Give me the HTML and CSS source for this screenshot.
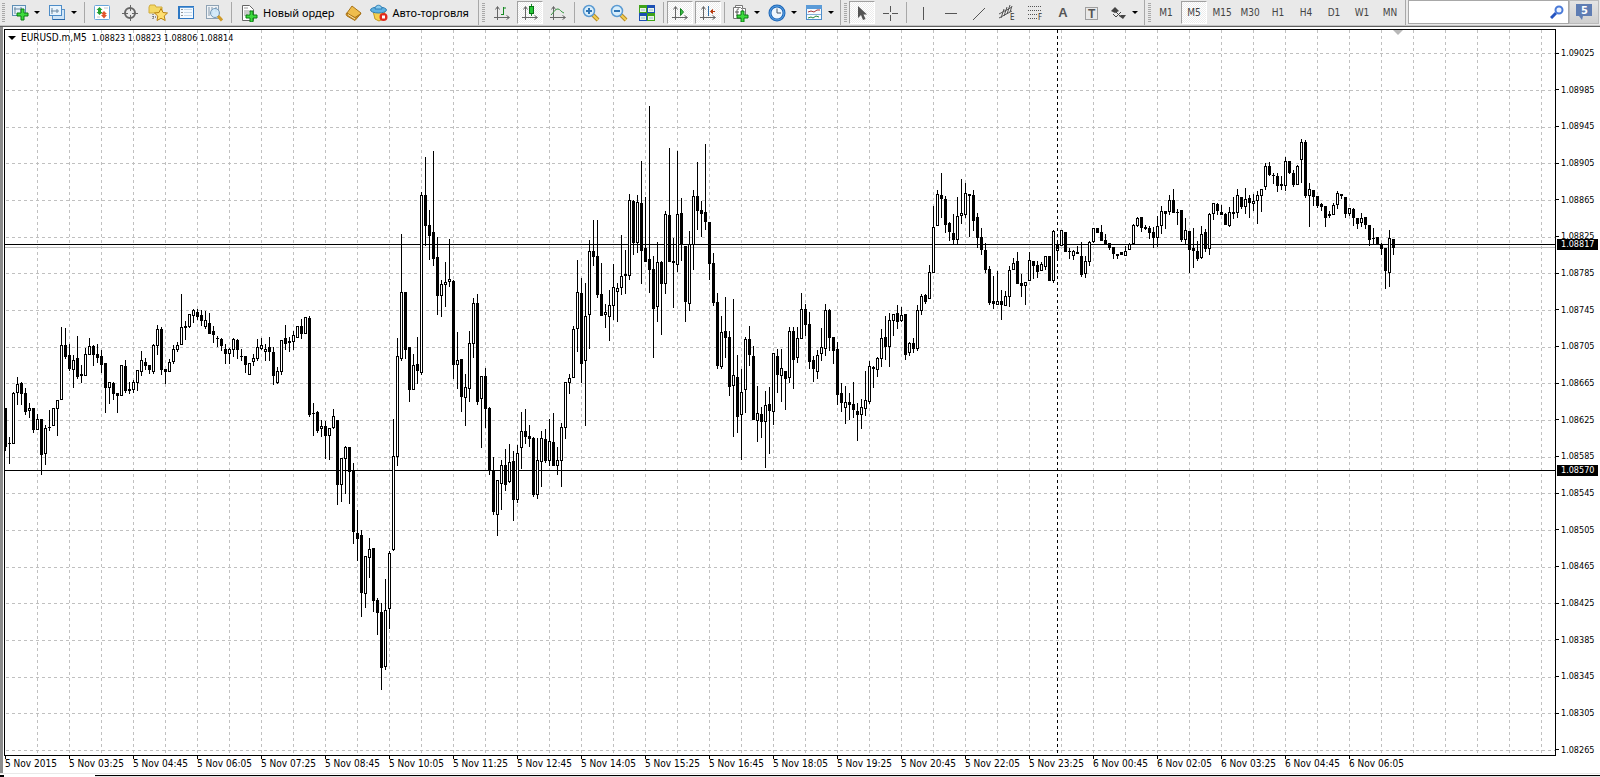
FILE: index.html
```html
<!DOCTYPE html>
<html lang="ru">
<head>
<meta charset="utf-8">
<title>EURUSD.m,M5</title>
<link rel="stylesheet" href="styles.css">
</head>
<body>
<header class="toolbar">
  <div class="group group-main">
    <span class="grip"></span>
    <button class="tool drop" aria-label="Новый график"><svg width="18" height="18"><rect x="1.500" y="1.500" width="13" height="10" fill="#e6f2fb" stroke="#5f8fb5"/><path d="M4 3v7M3 5h8M10 3v5" stroke="#6b87a0" fill="none"/><path d="M10 5h3v4h4v3h-4v4h-3v-4H6V9h4z" fill="#3ddb3d" stroke="#0a7a12"/></svg></button>
    <button class="tool drop" aria-label="Профили"><svg width="18" height="18"><rect x="4.500" y="5.500" width="12" height="10" fill="#cfe4f6" stroke="#5b93c8"/><path d="M5 15.500h12" stroke="#2a67a8"/><rect x="1.500" y="1.500" width="12" height="10" fill="#eaf4fc" stroke="#4c8cc8"/><path d="M4 4v6M3 7h8M9 5v4" stroke="#6b87a0" fill="none"/></svg></button>
    <span class="sep"></span>
    <button class="tool" aria-label="Обзор рынка"><svg width="18" height="18"><rect x="1.500" y="1.500" width="15" height="14" rx="1" fill="#fff" stroke="#6aa6dc"/><path d="M6.500 3l3 3H8v2h1.500l-3 3-3-3H5V6H3.500z" fill="#20a030"/><path d="M11 7l3 3h-1.500v1H14l-3 3.500L8 11h1.500v-1H8z" fill="#e2542a"/><path d="M11 4h4M4 13h3" stroke="#c8c8c8"/></svg></button>
    <button class="tool" aria-label="Окно данных"><svg width="18" height="18"><circle cx="9" cy="9" r="5" fill="none" stroke="#666" stroke-width="2"/><path d="M9.500 1v6M9.500 11v6M1 9.500h6M11 9.500h6" stroke="#666"/></svg></button>
    <button class="tool" aria-label="Навигатор"><svg width="20" height="18"><path d="M1 3l1-2h5l1 2h6v6H1z" fill="#f4d965" stroke="#d0ab3c"/><path d="M5 10v6M5 13h4" stroke="#444" stroke-dasharray="1 1"/><path d="M13 4.500l2 4 4.500.5-3.300 3 1 4.500-4.200-2.200L9 16.500l.8-4.500-3.300-3 4.500-.5z" fill="#ffdf70" stroke="#b98212"/></svg></button>
    <button class="tool" aria-label="Терминал"><svg width="18" height="18"><rect x="1.500" y="2.500" width="15" height="12" fill="#f4faff" stroke="#2d78c4"/><path d="M2 3.500h15" stroke="#5c9ad8"/><path d="M2 3v11" stroke="#2d78c4" stroke-width="2"/><path d="M5 5v1M5 8v1M5 11v1" stroke="#333" stroke-width="1"/><path d="M7 5.500h8M7 8.500h8M7 11.500h8" stroke="#c8d9e8"/></svg></button>
    <button class="tool" aria-label="Тестер стратегий"><svg width="18" height="18"><rect x="1.500" y="1.500" width="12" height="13" fill="#f0f3f6" stroke="#8ea2b4"/><path d="M4 3v9M7 3v7M11 3v5" stroke="#8297aa"/><circle cx="10" cy="9" r="4.500" fill="#cfe8fa" fill-opacity=".85" stroke="#7398b8"/><path d="M13 12l4 4.500" stroke="#cf9a28" stroke-width="3"/></svg></button>
    <span class="sep"></span>
    <button class="tool text"><svg width="18" height="18"><path d="M2.500 1.500h7l4 4v11h-11z" fill="#fff" stroke="#666"/><path d="M4 4h4M4 7h7M4 9h5M4 11h4" stroke="#999"/><path d="M10 7h3v4h4v3h-4v4h-3v-4H6v-3h4z" fill="#3ddb3d" stroke="#0a7a12"/></svg><span>Новый ордер</span></button>
    <button class="tool" aria-label="Редактор"><svg width="18" height="18"><path d="M7 2l9 7-6 6-8-6z" fill="#efbd4c" stroke="#a8741a"/><path d="M1.500 9c-1 2 .5 3 .5 3l8 4.500 6-7-6 4z" fill="#c98e22" stroke="#a8741a"/><path d="M3 10.500l7 4.500" stroke="#fbe7b0"/></svg></button>
    <button class="tool text auto"><svg width="18" height="18"><path d="M3 7h12l-2 8-4 2-4-2z" fill="#f6d04e" stroke="#c29820"/><ellipse cx="8.500" cy="6" rx="8" ry="3" fill="#5fb2e2" stroke="#2f7fb5"/><path d="M5 5c0-5 7-5 7 0z" fill="#8accef" stroke="#2f7fb5"/><circle cx="13.500" cy="13" r="4" fill="#e02a1c"/><rect x="12" y="11.500" width="3" height="3" fill="#fff"/></svg><span>Авто-торговля</span></button>
  </div>
  <div class="group group-charts">
    <span class="grip"></span>
    <button class="tool" aria-label="Бары"><svg width="18" height="18" fill="none"><path d="M4.500 3v13M1 13.500h15M2.500 5.500l2-3 2 3M13.500 11.500l3 2-3 2" stroke="#666"/><path d="M10.500 3v8M10.500 4H13M8 10.500h2.500" stroke="#158a22"/></svg></button>
    <button class="tool on" aria-label="Японские свечи" aria-pressed="true"><svg width="18" height="18" fill="none"><path d="M4.500 3v13M1 13.500h15M2.500 5.500l2-3 2 3M13.500 11.500l3 2-3 2" stroke="#666"/><path d="M10.500 0v12" stroke="#158a22"/><rect x="8.500" y="2.500" width="4" height="7" fill="#27c837" stroke="#0b7017"/></svg></button>
    <button class="tool" aria-label="Линия"><svg width="18" height="18" fill="none"><path d="M4.500 3v13M1 13.500h15M2.500 5.500l2-3 2 3M13.500 11.500l3 2-3 2" stroke="#666"/><path d="M2 11c3-3 4-6 7-6 2 0 3 3 6 4" stroke="#36963f"/></svg></button>
    <span class="sep"></span>
    <button class="tool" aria-label="Увеличить"><svg width="18" height="18"><path d="M11 11l5 5" stroke="#b88a20" stroke-width="4"/><path d="M11 11l5 5" stroke="#f2cf55" stroke-width="2"/><circle cx="7" cy="7" r="5.500" fill="#d8eefb" stroke="#5a9ad2" stroke-width="1.500"/><path d="M4 7h6M7 4v6" stroke="#2f74b4" stroke-width="2"/></svg></button>
    <button class="tool" aria-label="Уменьшить"><svg width="18" height="18"><path d="M11 11l5 5" stroke="#b88a20" stroke-width="4"/><path d="M11 11l5 5" stroke="#f2cf55" stroke-width="2"/><circle cx="7" cy="7" r="5.500" fill="#d8eefb" stroke="#5a9ad2" stroke-width="1.500"/><path d="M4 7h6" stroke="#2f74b4" stroke-width="2"/></svg></button>
    <button class="tool" aria-label="Окна мозаикой"><svg width="18" height="18"><path d="M1 1h8v8H1zM9 9h8v8H9z" fill="#3fa319"/><path d="M9 1h8v8H9zM1 9h8v8H1z" fill="#1c4fb4"/><path d="M2 4h6v4H2zM10 4h6v4h-6zM2 12h6v4H2zM10 12h6v4h-6z" fill="#e9f5e4"/><path d="M3 6h4M11 6h4M3 14h4M11 14h4" stroke="#9bb6d8"/></svg></button>
    <span class="sep"></span>
    <button class="tool on" aria-label="Автопрокрутка" aria-pressed="true"><svg width="18" height="18" fill="none"><path d="M4.500 3v13M1 13.500h15M2.500 5.500l2-3 2 3M13.500 11.500l3 2-3 2" stroke="#666"/><path d="M9.500 4.500v7l3-3.500z" fill="#3cc14a" stroke="#15801f"/></svg></button>
    <button class="tool on" aria-label="Сдвиг графика" aria-pressed="true"><svg width="18" height="18" fill="none"><path d="M4.500 3v13M1 13.500h15M2.500 5.500l2-3 2 3M13.500 11.500l3 2-3 2" stroke="#666"/><path d="M9.500 2v10" stroke="#2f6fa8"/><path d="M16 7.500h-3M13.500 5.500v4l-2-2z" stroke="#b83a10" fill="#b83a10"/></svg></button>
    <span class="sep"></span>
    <button class="tool drop" aria-label="Индикаторы"><svg width="18" height="18"><path d="M4.500 1.500h7v3h3v9h-10z" fill="#fff" stroke="#777"/><path d="M2.500 3.500h7l2 2v9h-9z" fill="#fff" stroke="#777"/><path d="M8 5c-2-.5-2 1-2 2v5M4 8h4" stroke="#555" fill="none"/><path d="M10 7h3v4h4v3h-4v4h-3v-4H6v-3h4z" fill="#3ddb3d" stroke="#0a7a12"/></svg></button>
    <button class="tool drop" aria-label="Периоды"><svg width="18" height="18"><circle cx="9" cy="9" r="7" fill="#eff7fd" stroke="#1d66b8" stroke-width="3"/><circle cx="9" cy="9" r="7" fill="none" stroke="#5ea6e6"/><path d="M9 4.500V9h4" fill="none" stroke="#456"/></svg></button>
    <button class="tool drop" aria-label="Шаблоны"><svg width="18" height="18"><rect x="1.500" y="1.500" width="15" height="14" fill="#f6fbff" stroke="#4e8ecb"/><path d="M1 3h16" stroke="#5b9bd8" stroke-width="4"/><path d="M2 10.500h14" stroke="#87b0d8"/><path d="M3 8l3-1 3 1 3-2h3" stroke="#a33" fill="none"/><path d="M3 14l3-1 2 1 3-2 3 1" stroke="#2a8a36" fill="none"/></svg></button>
  </div>
  <div class="group group-lines">
    <span class="grip"></span>
    <button class="tool on" aria-label="Курсор" aria-pressed="true"><svg width="18" height="18"><path d="M5 2v12l3-3 2 5 2.500-1-2-4.500H14z" fill="#555"/></svg></button>
    <button class="tool" aria-label="Перекрестие"><svg width="18" height="18"><path d="M9.500 2v6M9.500 11v6M2 9.500h6M11 9.500h6" stroke="#555"/></svg></button>
    <span class="sep"></span>
    <button class="tool" aria-label="Вертикальная линия"><svg width="18" height="18"><path d="M9.500 3v13" stroke="#555"/></svg></button>
    <button class="tool" aria-label="Горизонтальная линия"><svg width="18" height="18"><path d="M3 9.500h12" stroke="#555"/></svg></button>
    <button class="tool" aria-label="Трендовая линия"><svg width="18" height="18"><path d="M3 16L15 4" stroke="#555"/></svg></button>
    <button class="tool" aria-label="Канал"><svg width="18" height="18"><path d="M1 10L14 3M1 14l13-7M3 14l3-9M6 12l3-9M9 10l3-9M12 8l2-6" stroke="#555"/><text x="12" y="16" class="mark">E</text></svg></button>
    <button class="tool" aria-label="Фибоначчи"><svg width="18" height="18"><path d="M2 2.500h14M2 6.500h14M2 10.500h9M2 14.500h9" stroke="#555" stroke-dasharray="1 1"/><text x="12" y="16" class="mark">F</text></svg></button>
    <button class="tool" aria-label="Текст"><span class="letter">A</span></button>
    <button class="tool" aria-label="Метка"><svg width="18" height="18"><rect x="3.500" y="3.500" width="12" height="12" fill="none" stroke="#555" stroke-dasharray="1 1"/><text x="6" y="14" class="letter-mark">T</text></svg></button>
    <button class="tool drop" aria-label="Стрелки"><svg width="18" height="18"><path d="M6 3l4 4-4 2-4-2zM12 11h5l-3 4-4-3z" fill="#444"/><path d="M4 10l3 3 5-5M7 8l4 4" stroke="#444" fill="none"/></svg></button>
  </div>
  <div class="group group-periods">
    <span class="grip"></span>
    <button class="tool period">M1</button>
    <button class="tool period on" aria-pressed="true">M5</button>
    <button class="tool period">M15</button>
    <button class="tool period">M30</button>
    <button class="tool period">H1</button>
    <button class="tool period">H4</button>
    <button class="tool period">D1</button>
    <button class="tool period">W1</button>
    <button class="tool period">MN</button>
  </div>
  <label class="search"><input type="text" aria-label="Поиск"><svg width="14" height="14"><path d="M1 13l5-5" stroke="#2554c0" stroke-width="3"/><circle cx="9" cy="5" r="3.500" fill="#eef4ff" stroke="#4a7ad8" stroke-width="2"/></svg></label>
  <button class="news" aria-label="Сообщения: 5"><svg width="18" height="18"><path d="M1 1h16v12H8l-1 4-3-4H1z" fill="#5f7db3"/><text x="6" y="11" class="count">5</text></svg></button>
</header>

<main class="window">
  <div class="chart">
    <svg class="plot" id="plot" width="100%" height="100%" shape-rendering="crispEdges"></svg>
    <div class="title"><span class="caret"></span><span class="symbol">EURUSD.m,M5</span><span>1.08823 1.08823 1.08806 1.08814</span></div>
    <span class="shift"></span>
  </div>
  <div class="prices">
    <span>1.09025</span><span>1.08985</span><span>1.08945</span><span>1.08905</span><span>1.08865</span><span>1.08825</span><span>1.08785</span><span>1.08745</span><span>1.08705</span><span>1.08665</span><span>1.08625</span><span>1.08585</span><span>1.08545</span><span>1.08505</span><span>1.08465</span><span>1.08425</span><span>1.08385</span><span>1.08345</span><span>1.08305</span><span>1.08265</span>
    <b class="tag tag-upper">1.08817</b>
    <b class="tag tag-lower">1.08570</b>
  </div>
  <div class="times">
    <span>5 Nov 2015</span><span>5 Nov 03:25</span><span>5 Nov 04:45</span><span>5 Nov 06:05</span><span>5 Nov 07:25</span><span>5 Nov 08:45</span><span>5 Nov 10:05</span><span>5 Nov 11:25</span><span>5 Nov 12:45</span><span>5 Nov 14:05</span><span>5 Nov 15:25</span><span>5 Nov 16:45</span><span>5 Nov 18:05</span><span>5 Nov 19:25</span><span>5 Nov 20:45</span><span>5 Nov 22:05</span><span>5 Nov 23:25</span><span>6 Nov 00:45</span><span>6 Nov 02:05</span><span>6 Nov 03:25</span><span>6 Nov 04:45</span><span>6 Nov 06:05</span>
  </div>
</main>
<footer class="tabs"><span class="tab"></span><span class="rest"></span></footer>
<script src="chart.js"></script>
</body>
</html>
```

FILE: styles.css
```css
* { box-sizing: border-box; }

body {
  margin: 0;
  height: 100vh;
  display: flex;
  flex-direction: column;
  overflow: hidden;
  background: #fff;
  color: #000;
  font: 9px/12px "DejaVu Sans Condensed", "DejaVu Sans", sans-serif;
}

/* Toolbar */
.toolbar {
  flex: none;
  display: flex;
  height: 27px;
  background: #e9e9e9;
  border-bottom: 1px solid #5f5f5f;
  box-shadow: inset 0 -1px #c4c4c4;
}
.group {
  flex: none;
  display: flex;
  align-items: center;
  gap: 2px;
  height: 25px;
  border-right: 1px solid #a8a8a8;
}
.group-main { width: 479px; }
.group-charts { width: 362px; }
.group-lines { width: 304px; }
.group-periods { width: 261px; }
.grip {
  width: 3px;
  height: 20px;
  margin-left: 3px;
  background: repeating-linear-gradient(#a8a8a8 0 1px, transparent 1px 2px);
}
.group-main .grip { margin: 0 1px 0 2px; }
.group-charts .grip { margin-right: 2px; }
.sep {
  width: 1px;
  height: 21px;
  margin: 0 1px;
  background: #a8a8a8;
}
.group-main .sep { margin: 0 2px; }
.tool {
  flex: none;
  display: flex;
  align-items: center;
  justify-content: center;
  width: 26px;
  height: 23px;
  padding: 0;
  border: 1px solid transparent;
  background: none;
  color: #000;
}
.tool svg { flex: none; display: block; }
.tool.on {
  border-color: #a0a0a0 #fff #fff #a0a0a0;
  background: repeating-conic-gradient(#fff 0 25%, #ececec 0 50%) 0 0 / 2px 2px;
}
.tool.drop { width: 35px; gap: 5px; }
.tool.drop::after {
  content: "";
  border: solid transparent;
  border-width: 3px 3px 0;
  border-top-color: #000;
}
.tool.text {
  width: auto;
  padding: 0 3px;
  gap: 5px;
  font: 11px/16px "Noto Sans", "Open Sans", sans-serif;
  white-space: nowrap;
}
.tool.auto { padding: 0; }
.tool.period {
  color: #444;
  font: 10px/14px "DejaVu Sans Condensed", "DejaVu Sans", sans-serif;
}
.mark { font: 8px "DejaVu Sans Condensed", sans-serif; fill: #333; }
.letter { color: #555; font: bold 13px/16px "Liberation Sans", sans-serif; }
.letter-mark { font: bold 12px "Liberation Sans", sans-serif; fill: #555; }

.search {
  flex: 1;
  display: flex;
  align-items: center;
  min-width: 60px;
  height: 24px;
  margin-left: 2px;
  padding-right: 4px;
  border: 1px solid #a8a8a8;
  background: #fff;
}
.search input {
  flex: 1;
  min-width: 0;
  border: 0;
  outline: 0;
  background: none;
}
.news {
  flex: none;
  display: flex;
  align-items: center;
  justify-content: center;
  width: 30px;
  height: 24px;
  margin-right: 1px;
  padding: 0;
  border: 1px solid #bbb;
  background: linear-gradient(#e4e4e4, #cfcfcf);
}
.count { font: bold 11px "DejaVu Sans Condensed", sans-serif; fill: #fff; }

/* Chart window */
.window {
  flex: 1;
  min-height: 0;
  display: grid;
  grid-template: 1fr 17px / 1fr 44px;
  padding-top: 2px;
  border-left: 3px solid #8c8c8c;
  padding-left: 1px;
}
.chart {
  position: relative;
  min-width: 0;
  overflow: hidden;
  border: 1px solid #000;
}
.plot { display: block; }
.grid-line { stroke: #c0c0c0; stroke-dasharray: 3 3; }
.day-line { stroke: #000; stroke-dasharray: 3 3; }
.bid-line { stroke: #c0c0c0; }
.level { stroke: #000; }
.wick, .down { fill: #000; }
.up { fill: #fff; stroke: #000; }
.title {
  position: absolute;
  left: 3px;
  top: 2px;
  display: flex;
  align-items: center;
  gap: 5px;
  white-space: nowrap;
}
.symbol { font-size: 10px; }
.caret {
  border: solid transparent;
  border-width: 4px 4px 0;
  border-top-color: #000;
}
.shift {
  position: absolute;
  right: 152px;
  top: 0;
  border: solid transparent;
  border-width: 5px 5px 0;
  border-top-color: #b8b8b8;
}
.prices {
  position: relative;
  display: flex;
  flex-direction: column;
  justify-content: space-between;
  height: 709px;
  margin-top: 18px;
}
.prices > span { display: flex; align-items: center; gap: 2px; }
.prices > span::before { content: ""; width: 3px; height: 1px; background: #000; }
.tag {
  position: absolute;
  left: 1px;
  width: 41px;
  height: 11px;
  padding-left: 4px;
  background: #000;
  color: #fff;
  font-weight: normal;
  line-height: 11px;
}
.tag-upper { top: 192px; }
.tag-lower { top: 418px; }
.times {
  grid-column: 1 / -1;
  display: flex;
  padding-left: 1px;
  overflow: hidden;
}
.times span {
  flex: none;
  width: 64px;
  padding-top: 2px;
  font-size: 10px;
  white-space: nowrap;
  background: linear-gradient(#000, #000) 0 0 / 1px 3px no-repeat;
}

.tabs {
  flex: none;
  display: flex;
  height: 4px;
  border-top: 1px solid #e9e9e9;
}
.tab { width: 95px; margin-top: 1px; border-left: 4px solid #000; }
.rest { flex: 1; margin-top: 1px; border-top: 1px solid #000; background: #e4e4e4; }
```

FILE: chart.js
```javascript
// Candles: high, body top, body bottom, low (thirds of a pixel below the
// block's base line), then 1 for a rising candle and 0 for a falling one.
const blocks = [
  [280, `384 384 500 512 0|471 489 492 551 0|336 339 491 491 1|291 312 338 375 1|306 309 342 375 0|324 339 396 405 0|369 384 392 414 1|384 384 450 459 0|402 417 449 449 1|417 417 524 585 0|436 444 521 555 1|390 441 444 453 0|384 384 437 437 1|360 360 386 468 1|141 195 359 359 1|144 195 230 237 0|192 225 266 272 0|225 240 269 324 1|168 234 290 296 0|255 282 288 309 0|204 222 287 287 1|174 198 224 224 1|195 198 224 258 0|192 222 234 249 0|210 228 254 279 0|249 249 323 399 0|306 306 323 372 1|306 309 342 360 0|339 339 348 399 0|255 255 347 347 1|240 258 333 339 0|306 327 333 342 0|300 306 329 338 1|270 270 308 333 1|213 240 275 287 1|234 246 257 269 0|255 255 269 281 0|192 195 275 281 1|135 147 197 225 1|141 147 269 285 0|267 267 275 312 0|237 246 275 275 1|195 207 245 251 1|186 195 209 215 1|42 141 194 194 1|123 138 144 180 0|102 102 140 143 1|87 90 107 129 1|87 96 110 120 0|90 105 123 138 0|93 120 140 147 1|99 129 161 161 0|138 153 165 188 0|168 174 177 201 0|174 177 198 213 0|192 207 221 252 0|204 207 221 252 1|174 177 209 231 1|177 180 210 237 0|207 228 231 243 0|228 228 255 279 0|249 249 284 284 1|222 234 245 258 1|177 201 236 243 1|174 195 206 210 1|192 207 215 243 1|171 201 215 243 0|201 216 288 315 0|261 273 308 312 1|180 180 275 285 1|135 174 192 210 0|171 183 189 216 0|153 165 185 210 1|138 138 173 173 1|117 138 162 177 0|111 111 161 161 1|108 114 405 411 0|369 399 402 468 0|393 396 453 459 0|420 438 446 471 1|423 438 467 537 0|444 444 467 540 1|387 408 443 447 1|420 420 615 675 0|534 534 614 666 1|498 501 536 642 1|501 501 576 672 0|549 570 756 792 0|690 759 777 843 0|750 765 939 1011 0|828 828 941 984 1|774 807 833 894 1|804 804 963 996 0|954 960 999 1065 0`],
  [550, `160 186 354 420 0|87 180 351 360 1|3 9 177 237 1`],
  [130, `867 978 1259 1262 1|624 678 980 1007 1|312 486 686 692 1|486 486 660 687 0|651 651 780 816 0|672 705 779 779 1|621 702 723 762 0|186 195 728 735 1|81 195 288 348 0|240 285 318 390 0|63 306 387 408 0|321 381 498 555 0|450 462 497 561 1|396 456 464 531 1|327 447 455 471 1|450 453 705 747 0|606 690 704 777 1|687 687 801 846 0|732 771 803 888 1|603 639 776 816 1|504 519 641 684 1|492 519 816 825 0|738 738 806 954 1|714 738 837 894 0|831 834 1023 1035 0|981 1023 1146 1155 0|1050 1050 1154 1218 1|990 1005 1061 1140 1|957 1005 1065 1083 0|942 996 1055 1059 1|963 993 1110 1173 0|945 969 1109 1119 1|846 903 953 1017 1|837 903 921 942 0|885 918 927 951 0|921 924 1095 1101 0|924 990 1094 1107 1|903 924 995 1071 1|897 927 993 999 0|867 933 992 1008 1|849 936 1008 1008 0|951 990 1007 1035 1|879 891 992 1071 1|756 756 893 927 1|732 744 758 792 1|588 597 743 743 1`],
  [90, `510 606 716 786 1|564 609 822 879 0|579 678 812 1008 1|450 483 674 777 1|390 483 501 528 0|390 498 615 624 0|519 612 678 678 0|642 666 674 714 1|600 645 680 753 1|522 591 647 690 1|579 594 605 696 1|435 558 593 615 1|480 552 558 612 0|312 330 557 570 1|330 333 459 495 0|315 336 458 489 1|213 339 483 582 0|321 474 516 516 0|48 507 540 609 0|498 537 657 804 0|456 516 650 696 1|513 516 582 735 0|363 372 581 612 1|174 375 516 516 0|444 513 519 654 0|183 372 524 546 1|324 369 465 513 0|468 468 636 696 0|423 462 641 663 1|300 318 464 540 1|216 318 363 420 0|333 360 372 441 0|162 366 396 420 0|396 396 522 570 0|489 519 639 648 0|609 636 828 837 0|678 726 830 837 1|621 723 744 804 0|723 741 891 918 0|627 855 887 1041 1|795 861 981 1029 0|837 906 974 1110 1|741 747 899 969 1|708 747 795 828 0|768 798 990 990 0|888 969 992 1056 1|951 972 996 1044 0|903 945 995 1134 1|891 942 963 1092 0`],
  [160, `579 579 755 795 1|567 588 645 699 0|567 624 647 726 1|633 633 657 750 0|501 513 653 669 1|501 513 600 687 0|501 534 593 609 1|399 447 536 537 1|432 447 495 528 0|456 492 606 627 0|588 600 627 666 0|570 585 635 657 1|504 561 581 603 1|432 450 566 588 1|447 450 534 573 0|531 531 573 612 0|546 567 705 735 0|669 699 729 756 0|678 726 743 792 1|699 726 735 780 0|666 732 750 774 0|729 753 765 843 0|717 741 764 807 1|633 720 746 768 1|603 618 725 732 1|618 621 627 684 0|591 594 629 651 1|507 534 596 621 1|468 531 561 600 0|459 480 560 621 1|462 462 482 528 1|435 459 486 507 0|441 465 482 486 1|462 462 585 600 0|546 549 578 588 1|534 549 567 579 0|435 450 566 573 1|402 408 452 465 1|402 405 426 432 0|315 336 416 416 1|138 201 338 338 1|90 102 197 197 1|39 105 117 174 0|108 117 195 219 0|186 189 216 243 0|162 219 240 252 0|111 168 239 252 1|57 159 167 192 1|69 99 164 174 1|102 102 108 231 0|90 105 183 213 0|159 171 234 264 0|204 231 270 285 0|249 270 330 339 0|318 327 429 435 0|348 423 432 447 0|333 423 434 434 1|390 423 435 480 0|393 408 437 437 1|318 330 410 441 1|294 309 329 330 1|276 303 372 372 0|342 369 378 411 0|366 366 377 435 1|276 300 362 363 1|303 303 318 357 0|303 315 336 354 0|306 312 332 333 1|288 288 320 330 1|288 288 363 363 0|210 213 362 369 1|240 255 272 300 1|210 210 257 257 1|216 216 276 276 0|264 273 276 297 0|270 273 287 300 1|258 276 282 282 0|246 288 345 351 0|288 303 341 354 1|243 246 305 318 1|204 204 245 248 1|204 204 219 219 0|195 216 243 243 0|222 240 252 252 0|249 249 264 270 0|261 261 282 297 0|282 282 288 297 0|276 276 285 285 0|258 273 287 288 1|249 252 269 270 1|192 195 251 252 1|171 174 197 201 1|171 171 204 216 0|195 201 207 210 0|198 204 219 237 0|201 216 234 264 0|168 198 233 261 1|138 153 197 222 1|153 153 162 207 0|105 120 155 165 1|87 120 159 159 0|147 156 159 195 0`],
  [120, `270 270 360 366 0|294 330 359 372 1|333 333 390 459 0|324 384 393 444 0|363 393 417 423 0|318 342 413 417 1|327 336 387 396 0|279 282 386 405 1|249 249 281 300 1|249 252 273 285 0|255 276 285 285 0|279 282 315 315 0|261 276 317 321 1|231 276 282 297 0|207 225 278 294 1|231 231 261 267 0|204 237 260 282 1|225 234 249 294 0|222 243 251 273 1|213 225 242 312 1|207 207 227 276 1|129 138 200 210 1|126 138 165 168 0|159 165 168 192 0|159 168 198 216 0|168 192 198 210 0|111 123 197 213 1|123 123 159 162 0|150 159 195 201 0|135 138 194 195 1|57 66 119 189 1|60 66 228 234 0|189 207 227 321 1|210 210 231 258 0|228 228 258 264 0|249 252 261 273 0|258 258 294 321 0|273 282 288 294 0|249 255 284 285 1|213 219 254 267 1|222 222 228 237 0|231 231 282 294 0|264 264 281 288 1|264 267 294 318 0|294 294 312 327 0|279 294 308 321 1|291 291 315 327 0|315 315 360 378 0|324 354 357 372 0|351 351 375 375 0|369 375 387 405 0|384 384 453 507 0|330 354 458 501 1|357 357 384 405 0`]
];

const plot = document.getElementById("plot");
const TOP = 30;

function add(name, cls, attrs) {
  const el = document.createElementNS("http://www.w3.org/2000/svg", name);
  el.setAttribute("class", cls);
  for (const key in attrs) el.setAttribute(key, attrs[key]);
  plot.appendChild(el);
}
function across(cls, y, from) {
  add("line", cls, { x1: from, x2: "100%", y1: y + 0.5, y2: y + 0.5 });
}
function down(cls, x) {
  add("line", cls, { x1: x + 0.5, x2: x + 0.5, y1: 0, y2: "100%" });
}

for (let x = 32; x < plot.clientWidth; x += 32) down("grid-line", x);
for (let k = 0; k < 20; k++) across("grid-line", Math.round(23.33 + k * 36.667), 1);
across("bid-line", 217, 0);
across("level", 214, 0);
across("level", 440, 0);
let x = 0;
for (const [base, rows] of blocks) {
  for (const row of rows.split("|")) {
    const [high, top, bottom, low, up] = row.split(" ").map(Number);
    const y = v => base - TOP + Math.round(v / 3);
    add("rect", "wick", { x, y: y(high), width: 1, height: y(low) - y(high) });
    const h = Math.max(1, y(bottom) - y(top));
    if (up) add("rect", "up", { x: x - 0.5, y: y(top) + 0.5, width: 2, height: h - 1 });
    else add("rect", "down", { x: x - 1, y: y(top), width: 3, height: h });
    x += 4;
  }
}
down("day-line", 1052);
```
